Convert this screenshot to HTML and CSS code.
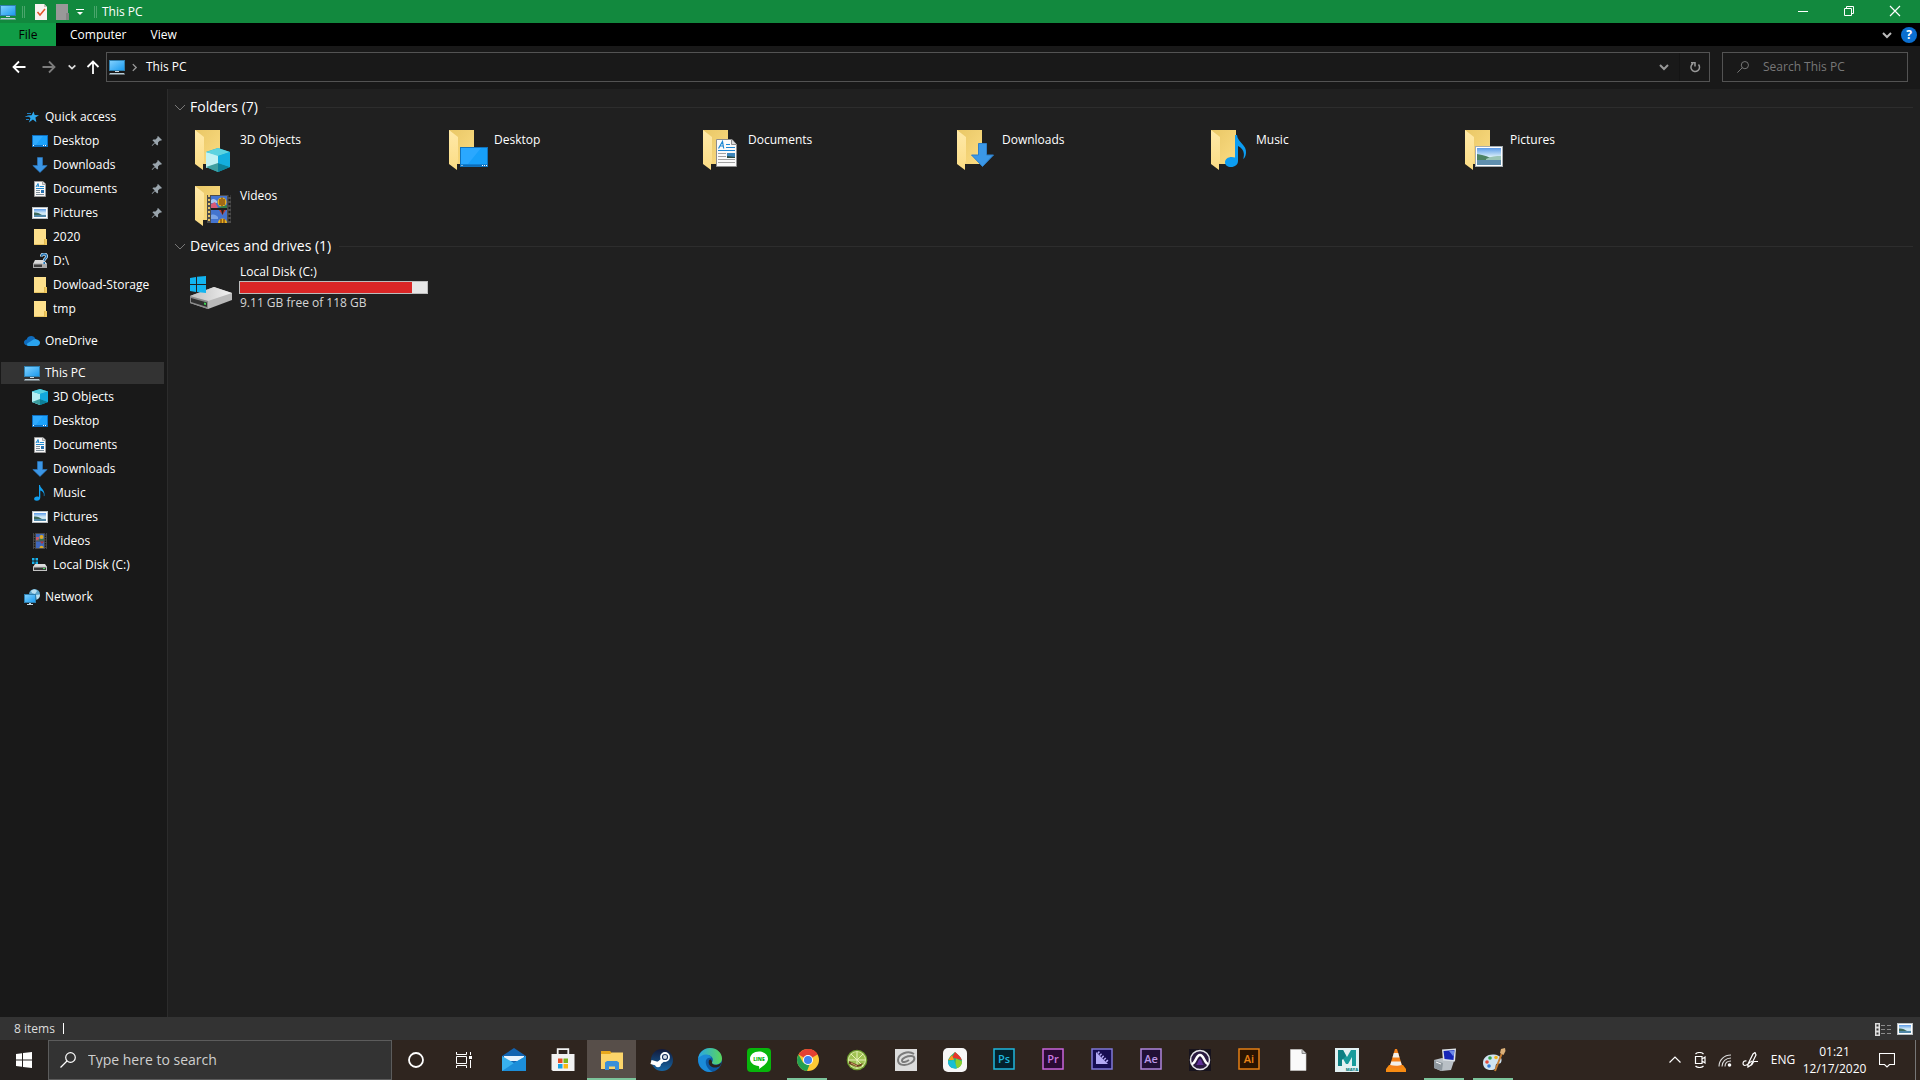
FILE: index.html
```html
<!DOCTYPE html>
<html lang="en">
<head>
    <meta charset="UTF-8">
    <meta name="viewport" content="width=device-width, initial-scale=1.0">
    <title>This PC</title>
    <link rel="stylesheet" href="styles.css">
</head>
<body>
    <!-- Shared icons -->
    <svg class="sprite" aria-hidden="true">
        <defs>
            <linearGradient id="gScreen" x1="0" y1="0" x2="1" y2="1">
                <stop offset="0" stop-color="#7fd0ff"/>
                <stop offset="1" stop-color="#1c9bee"/>
            </linearGradient>
            <linearGradient id="gFolder" x1="0" y1="0" x2="1" y2="1">
                <stop offset="0" stop-color="#e9c766"/>
                <stop offset="1" stop-color="#fbdc83"/>
            </linearGradient>
            <linearGradient id="gFlap" x1="0" y1="0" x2="0" y2="1">
                <stop offset="0" stop-color="#ffe9a8"/>
                <stop offset="1" stop-color="#fbdc84"/>
            </linearGradient>
            <linearGradient id="gSky" x1="0" y1="0" x2="0" y2="1">
                <stop offset="0" stop-color="#5b9be8"/>
                <stop offset="0.5" stop-color="#d5ecf8"/>
                <stop offset="1" stop-color="#b5d5e2"/>
            </linearGradient>
            <linearGradient id="gEdge" x1="0" y1="0" x2="1" y2="0">
                <stop offset="0" stop-color="#28a5e8"/>
                <stop offset="1" stop-color="#5bd75a"/>
            </linearGradient>
            <linearGradient id="gDrive" x1="0" y1="0" x2="1" y2="0">
                <stop offset="0" stop-color="#bfbfbf"/>
                <stop offset="1" stop-color="#f2f2f2"/>
            </linearGradient>
            <linearGradient id="gSteam" x1="0" y1="0" x2="0" y2="1">
                <stop offset="0" stop-color="#12193a"/>
                <stop offset="1" stop-color="#1666a5"/>
            </linearGradient>
        </defs>

        <symbol id="pc" viewBox="0 0 16 16">
            <rect x="0" y="1" width="16" height="11" fill="#2f7fae"/>
            <rect x="1" y="2" width="14" height="9" fill="url(#gScreen)"/>
            <path d="M6 12h4v1H6z" fill="#cfd8dd"/>
            <path d="M1 14h14l1 1.500H0z" fill="#b8cbd5"/>
        </symbol>
        <symbol id="star" viewBox="0 0 16 16">
            <path d="M9.500 2.500l1.200 3.600 4.300.2-3.600 2.300 1 4.600-3.500-2.600-4 2.900 1.600-4.600L3 6.500l4.600-.3z" fill="#2ea8ee"/>
            <path d="M3 4.500h4M1.500 7.500h4M2 10.500h3" stroke="#1f7fc0"/>
        </symbol>
        <symbol id="desktop" viewBox="0 0 16 16">
            <rect x="0" y="2" width="16" height="12" fill="#0e6fc0"/>
            <rect x="1" y="3" width="14" height="9" fill="#1ba1fb"/>
            <path d="M1 3h10L4 12H1z" fill="#2faaff"/>
            <path d="M1 12.500h1M11 12.500h1M13 12.500h1" stroke="#fff"/>
        </symbol>
        <symbol id="downloads" viewBox="0 0 16 16">
            <path d="M5.500 0.500h5v8h4.700L8 15.500.8 8.500h4.700z" fill="#3b96e6" stroke="#2b7bc5" stroke-width=".6"/>
        </symbol>
        <symbol id="documents" viewBox="0 0 16 16">
            <path d="M2.500.5H11L13.500 3v12.500h-11z" fill="#f8f8f8" stroke="#9a9a9a"/>
            <path d="M10.500.5v3h3" fill="#ddd" stroke="#8a8a8a" stroke-width=".7"/>
            <path d="M4 6L6 2.500 7 6M4.500 5h2.300M4 7.500h8M8 5.500h4" stroke="#1f88cf" fill="none"/>
            <path d="M4 9.500h4M4 11.500h4M4 13.500h8" stroke="#7d8c97"/>
            <path d="M9 9h3v3H9z" fill="#2872b0"/>
        </symbol>
        <symbol id="pictures" viewBox="0 0 16 16">
            <rect x=".5" y="2.500" width="15" height="11" fill="#fff" stroke="#b9c0c4"/>
            <rect x="2" y="4" width="12" height="8" fill="url(#gSky)"/>
            <path d="M2 7.500c3-.5 6 1 8 2.500H2z" fill="#3d6a5a"/>
            <path d="M2 10h12v2H2z" fill="#4f87a8"/>
        </symbol>
        <symbol id="folder" viewBox="0 0 16 16">
            <path d="M2 0h12v16H2z" fill="#fde08c"/>
            <path d="M12 10h3v6h-3z" fill="#f0c960"/>
            <path d="M12.500 10v5.500H2" stroke="#d9b047" stroke-width=".6" fill="none"/>
        </symbol>
        <symbol id="drive-unknown" viewBox="0 0 16 16">
            <path d="M3 7h9l3 4H1z" fill="#d9d9d9"/>
            <path d="M1 10.500h14v4.500H1z" fill="#a9a9a9"/>
            <path d="M2 11.500h8v2.500H2z" fill="#3c3c3c"/>
            <path d="M9.500 3.500c0-3.300 5-3.300 5 0 0 2-2.300 2-2.300 4.200M12.200 9v2" stroke="#d7ecfb" stroke-width="3" fill="none"/>
            <path d="M9.500 3.500c0-3.300 5-3.300 5 0 0 2-2.300 2-2.300 4.200M12.200 9v2" stroke="#1f6fae" stroke-width="1.500" fill="none"/>
        </symbol>
        <symbol id="onedrive" viewBox="0 0 16 16">
            <path d="M4 12.500C1 12.500 0 11 0 9.300 0 7.700 1.200 6.600 2.600 6.400 3.500 4 5.200 3 7.200 3c2 0 3.600 1.200 4.200 3L5 12.500z" fill="#0f6cbd"/>
            <path d="M4.500 13C3 13 2.200 11.500 3.500 10.300L9.500 6.500c1-.6 2.500-.8 3.500 0 1.600.4 3 1.600 3 3.300 0 1.900-1.400 3.200-3.200 3.200z" fill="#2aa3ee"/>
        </symbol>
        <symbol id="cube" viewBox="0 0 16 16">
            <path d="M8 0l8 2.500v10.500L8 16 0 13V2.500z" fill="#14a9c9"/>
            <path d="M0 2.500L8 5v11L0 13z" fill="#b5eef2"/>
            <path d="M8 5l8-2.500L8 0 0 2.500z" fill="#55cfdf"/>
            <path d="M0 13l8-3v6z" fill="#3a9c9d"/>
            <path d="M8 10l8 3-8 3z" fill="#0d7f98"/>
            <path d="M8 5l8-2.500V13L8 10z" fill="#12a8dc"/>
        </symbol>
        <symbol id="music" viewBox="0 0 16 16">
            <path d="M7 0h1c.3 3.500 5 4.500 4.500 10.500-.5 1-1 .8-.6-.5C12.200 7.500 10 6 8.300 5.500v7c0 2-1.500 3.300-3.500 3.300C1 15.800 1.500 11.500 5 11.500c.8 0 1.500.2 2 .4z" fill="#12a0f0"/>
        </symbol>
        <symbol id="videos" viewBox="0 0 16 16">
            <rect x="1" y="0" width="14" height="16" fill="#4b4b4b"/>
            <path d="M2.500 0v16M13.500 0v16" stroke="#181818" stroke-width="1.200" stroke-dasharray="1.500 1"/>
            <rect x="4" y="1" width="8" height="6.500" fill="#3f68bd"/>
            <rect x="4" y="8.500" width="8" height="6.500" fill="#3f68bd"/>
            <path d="M4 4h3v3.500H4z" fill="#c55a6d"/>
            <circle cx="9.500" cy="4" r="2" fill="#dda920"/>
            <path d="M4 7.500h8V6H8z" fill="#397345"/>
            <path d="M8 8.500h4l-2 2.500z" fill="#b63631"/>
            <path d="M7.500 15c0-3 4-3 4 0z" fill="#dda920"/>
        </symbol>
        <symbol id="drive" viewBox="0 0 16 16">
            <path d="M3 7h10l2 3H1z" fill="#dcdcdc"/>
            <path d="M1 9.500h14V14H1z" fill="#c4c4c4"/>
            <path d="M2 10.500h12V13H2z" fill="#373737"/>
            <path d="M11 11.500h2" stroke="#42e25a"/>
            <path d="M0 1h2.500v2.500H0zM3.500 1H6v2.500H3.500zM0 4.500h2.500V7H0zM3.500 4.500H6V7H3.500z" fill="#19b1ea"/>
        </symbol>
        <symbol id="network" viewBox="0 0 16 16">
            <circle cx="10.500" cy="5.500" r="5.500" fill="#5da5cb"/>
            <path d="M7 2c2-2 5-2 6 0l-2 3-3-1zM12 6l4-.5c0 2-1 4-3 5z" fill="#b9dff0"/>
            <rect x="0" y="5" width="12" height="9" fill="#2f7fae"/>
            <rect x="1" y="6" width="10" height="7" fill="url(#gScreen)"/>
            <path d="M5 14h2v1H5zM3 15h6v1H3z" fill="#c4d6e0"/>
        </symbol>
        <symbol id="pin" viewBox="0 0 12 12">
            <path d="M7 1l4 4-1.200.7-.8-.2-2 2 .1 2.200-.9.8-2.300-2.300L1.500 10.700l-.8.3.4-.9 2.600-2.500L1.400 5.300l.9-.8 2.200.1 2-2-.2-.8z" fill="#9aa5ad"/>
        </symbol>
        <symbol id="chevron" viewBox="0 0 12 12">
            <path d="M1 4l5 5 5-5" fill="none" stroke="currentColor"/>
        </symbol>
        <symbol id="chevron-bold" viewBox="0 0 12 12">
            <path d="M2 4l4 4 4-4" fill="none" stroke="currentColor" stroke-width="2"/>
        </symbol>
        <symbol id="search" viewBox="0 0 16 16">
            <circle cx="10.500" cy="5.500" r="4.800" fill="none" stroke="currentColor" stroke-width="1.200"/>
            <path d="M7 9L.5 15.500" stroke="currentColor" stroke-width="1.200"/>
        </symbol>
        <symbol id="folder-back" viewBox="0 0 48 48">
            <path d="M7 4h25v34H7z" fill="url(#gFolder)"/>
            <path d="M7 4l9 7v24l-1 3v6l-8-6z" fill="url(#gFlap)"/>
        </symbol>
    </svg>

    <div class="screen">
        <header class="titlebar">
            <svg class="icon"><use href="#pc"/></svg>
            <span class="divider"></span>
            <button class="quick" aria-label="Properties">
                <svg class="icon" viewBox="0 0 16 16">
                    <path d="M2 0h9l3 3v13H2z" fill="#f7f3f1"/>
                    <path d="M11 0v3h3" fill="#c9c2bd"/>
                    <path d="M4.500 8l2.500 3 5-6" fill="none" stroke="#e0562b" stroke-width="1.500"/>
                </svg>
            </button>
            <button class="quick" aria-label="New folder">
                <svg class="icon" viewBox="0 0 16 16">
                    <path d="M2 0h12v16H2z" fill="#999"/>
                    <path d="M12 9h3v7h-3z" fill="#848484"/>
                </svg>
            </button>
            <button class="quick small" aria-label="Customize toolbar">
                <svg class="icon tiny" viewBox="0 0 8 8"><path d="M0 1.500h8" stroke="#fff"/><path d="M1 4h6L4 7z" fill="#fff"/></svg>
            </button>
            <span class="divider"></span>
            <h1>This PC</h1>
            <div class="window-buttons">
                <button aria-label="Minimize"><svg class="icon" viewBox="0 0 16 16"><path d="M3 7.500h10" stroke="#fff"/></svg></button>
                <button aria-label="Restore"><svg class="icon" viewBox="0 0 16 16"><path d="M3.500 4.500h7v7h-7zM5.500 4.500v-2h7v7h-2" fill="none" stroke="#fff"/></svg></button>
                <button aria-label="Close"><svg class="icon" viewBox="0 0 16 16"><path d="M3 2l10 10M13 2L3 12" stroke="#fff" stroke-width="1.200"/></svg></button>
            </div>
        </header>

        <nav class="ribbon">
            <button class="file-tab">File</button>
            <button class="tab">Computer</button>
            <button class="tab">View</button>
            <div class="ribbon-right">
                <button aria-label="Expand the ribbon"><svg class="icon tiny-12"><use href="#chevron-bold"/></svg></button>
                <button class="help" aria-label="Help">?</button>
            </div>
        </nav>

        <div class="address-row">
            <div class="nav-buttons">
                <button class="nav" aria-label="Back"><svg class="icon" viewBox="0 0 16 16"><path d="M14.500 8H3M8 2.500L2.500 8 8 13.500" fill="none" stroke="#fff" stroke-width="1.800"/></svg></button>
                <button class="nav" aria-label="Forward"><svg class="icon" viewBox="0 0 16 16"><path d="M1.500 8H13M8 2.500L13.500 8 8 13.500" fill="none" stroke="#7d7d7d" stroke-width="1.800"/></svg></button>
                <button class="nav recent" aria-label="Recent locations"><svg class="icon tiny-10" viewBox="0 0 12 12"><path d="M2 4l4 4 4-4" fill="none" stroke="#ddd" stroke-width="2"/></svg></button>
                <button class="nav up" aria-label="Up"><svg class="icon" viewBox="0 0 16 16"><path d="M8 15V3M2.500 8L8 2.500 13.500 8" fill="none" stroke="#fff" stroke-width="1.800"/></svg></button>
            </div>
            <div class="address">
                <svg class="icon"><use href="#pc"/></svg>
                <svg class="icon crumb" viewBox="0 0 8 8"><path d="M2.500 1l3 3-3 3" fill="none" stroke="#999" stroke-width="1.200"/></svg>
                <button class="crumb-name">This PC</button>
                <button class="address-btn" aria-label="Previous locations"><svg class="icon tiny-12"><use href="#chevron-bold"/></svg></button>
                <button class="address-btn refresh" aria-label="Refresh"><svg class="icon" viewBox="0 0 16 16"><path d="M11.500 5.500A4.300 4.300 0 1 1 6 4.600M4 3.800h4v3.700" fill="none" stroke="currentColor" stroke-width="1.500"/></svg></button>
            </div>
            <label class="search-box">
                <svg class="icon tiny-12"><use href="#search"/></svg>
                <input type="text" placeholder="Search This PC" aria-label="Search This PC">
            </label>
        </div>

        <div class="main">
            <aside class="sidebar">
                <a class="item" href="#"><svg class="icon"><use href="#star"/></svg>Quick access</a>
                <a class="item child" href="#"><svg class="icon"><use href="#desktop"/></svg>Desktop<svg class="pin"><use href="#pin"/></svg></a>
                <a class="item child" href="#"><svg class="icon"><use href="#downloads"/></svg>Downloads<svg class="pin"><use href="#pin"/></svg></a>
                <a class="item child" href="#"><svg class="icon"><use href="#documents"/></svg>Documents<svg class="pin"><use href="#pin"/></svg></a>
                <a class="item child" href="#"><svg class="icon"><use href="#pictures"/></svg>Pictures<svg class="pin"><use href="#pin"/></svg></a>
                <a class="item child" href="#"><svg class="icon"><use href="#folder"/></svg>2020</a>
                <a class="item child" href="#"><svg class="icon"><use href="#drive-unknown"/></svg>D:\</a>
                <a class="item child" href="#"><svg class="icon"><use href="#folder"/></svg>Dowload-Storage</a>
                <a class="item child" href="#"><svg class="icon"><use href="#folder"/></svg>tmp</a>

                <a class="item group" href="#"><svg class="icon"><use href="#onedrive"/></svg>OneDrive</a>

                <a class="item group selected" href="#"><svg class="icon"><use href="#pc"/></svg>This PC</a>
                <a class="item child" href="#"><svg class="icon"><use href="#cube"/></svg>3D Objects</a>
                <a class="item child" href="#"><svg class="icon"><use href="#desktop"/></svg>Desktop</a>
                <a class="item child" href="#"><svg class="icon"><use href="#documents"/></svg>Documents</a>
                <a class="item child" href="#"><svg class="icon"><use href="#downloads"/></svg>Downloads</a>
                <a class="item child" href="#"><svg class="icon"><use href="#music"/></svg>Music</a>
                <a class="item child" href="#"><svg class="icon"><use href="#pictures"/></svg>Pictures</a>
                <a class="item child" href="#"><svg class="icon"><use href="#videos"/></svg>Videos</a>
                <a class="item child" href="#"><svg class="icon"><use href="#drive"/></svg>Local Disk (C:)</a>

                <a class="item group" href="#"><svg class="icon"><use href="#network"/></svg>Network</a>
            </aside>

            <main class="content">
                <h2><svg class="icon tiny-12"><use href="#chevron"/></svg>Folders (7)</h2>
                <div class="tiles">
                    <a class="tile" href="#">
                        <svg viewBox="0 0 48 48">
                            <use href="#folder-back"/>
                            <path d="M30 22l12 4v15l-12 5-12-5V26z" fill="#14a9c9"/>
                            <path d="M18 26l12 3v10l-12 3z" fill="#c0f2f3"/>
                            <path d="M18 26l12-4 12 4-12 4z" fill="#5cd3e0"/>
                            <path d="M18 41l12-4v9z" fill="#3f9fa0"/>
                            <path d="M30 37l12 4-12 5z" fill="#0d839b"/>
                            <path d="M30 30l12-4v15l-12-4z" fill="#14aede"/>
                        </svg>
                        <span>3D Objects</span>
                    </a>
                    <a class="tile" href="#">
                        <svg viewBox="0 0 48 48">
                            <use href="#folder-back"/>
                            <rect x="18.500" y="21.500" width="27" height="19" fill="#17a0fa" stroke="#1173bd"/>
                            <path d="M19 22h20L26 38h-7z" fill="#2aa8ff"/>
                            <path d="M19 39.200h26" stroke="#0d6cb8" stroke-width="1.600"/>
                            <path d="M19.500 39.500h1M40 39.500h1M42 39.500h1M44 39.500h1" stroke="#fff"/>
                        </svg>
                        <span>Desktop</span>
                    </a>
                    <a class="tile" href="#">
                        <svg viewBox="0 0 48 48">
                            <use href="#folder-back"/>
                            <path d="M20.500 13.500H36l4.500 5v22h-20z" fill="#fafafa" stroke="#8d8d8d"/>
                            <path d="M35.500 13.500v5h5" fill="#ddd" stroke="#8d8d8d"/>
                            <path d="M22.500 22.500l4-7 1.200 7M24 20h3.500M30 18.500h4M30 21.500h9M22 24.500h17" fill="none" stroke="#1d87d3" stroke-width="1.200"/>
                            <path d="M22 27.500h8M22 30.500h8M22 33.500h17M22 36.500h17" stroke="#a2a2a2"/>
                            <path d="M31 27h8v5h-8z" fill="#3e86bb"/>
                            <path d="M31 30l8 1v1h-8z" fill="#2c4b41"/>
                        </svg>
                        <span>Documents</span>
                    </a>
                    <a class="tile" href="#">
                        <svg viewBox="0 0 48 48">
                            <use href="#folder-back"/>
                            <path d="M28.500 17.500h8v11.500h7L32.500 40.500 21.500 29h7z" fill="#3b98e8" stroke="#2d7fc8"/>
                        </svg>
                        <span>Downloads</span>
                    </a>
                    <a class="tile" href="#">
                        <svg viewBox="0 0 48 48">
                            <use href="#folder-back"/>
                            <path d="M31 9h2c.5 7 10 10 9 18-.3 3-1.500 5.500-2.800 6 .8-3 2.400-9-5.200-13v15c0 3.500-3 6-7 6-3.500 0-6-1.800-6-4.800 0-4 5-6.500 10-4.700z" fill="#0c9df2"/>
                        </svg>
                        <span>Music</span>
                    </a>
                    <a class="tile" href="#">
                        <svg viewBox="0 0 48 48">
                            <use href="#folder-back"/>
                            <rect x="17.500" y="20.500" width="27" height="20" fill="#fff" stroke="#a4adb2"/>
                            <rect x="19" y="22" width="24" height="17" fill="url(#gSky)"/>
                            <path d="M19 28c7 1 13 3 17 6H19z" fill="#4d8262"/>
                            <path d="M28 33c5-3 10-3 15-3v4H28z" fill="#9ac4b5"/>
                            <path d="M19 34h24v5H19z" fill="#5f8fae"/>
                        </svg>
                        <span>Pictures</span>
                    </a>
                    <a class="tile" href="#">
                        <svg viewBox="0 0 48 48">
                            <use href="#folder-back"/>
                            <rect x="19" y="13" width="24" height="28" fill="#4c4c4c"/>
                            <path d="M21 13v28" stroke="#e8c566" stroke-width="2" stroke-dasharray="2 2"/>
                            <path d="M41.500 13v28" stroke="#1c1c1c" stroke-width="2" stroke-dasharray="2 2"/>
                            <rect x="23" y="14" width="16" height="12" fill="#4474cf"/>
                            <rect x="23" y="28" width="16" height="13" fill="#4474cf"/>
                            <path d="M23 18c2-2 4-1 6 1v2h-6z" fill="#a9c6ef"/>
                            <path d="M23 22l4-2 3 6h-7z" fill="#d85a76"/>
                            <circle cx="34" cy="20" r="4.500" fill="#e8b21c"/>
                            <path d="M34 15.500v9M32 17v6M36 17v6" stroke="#5d2510"/>
                            <path d="M29 26h10v-3z" fill="#358046"/>
                            <path d="M23 27h16" stroke="#1f1f1f" stroke-width="2"/>
                            <path d="M31 28h7l-3.500 5z" fill="#c23c30"/>
                            <path d="M33 28h3l-1.500 5z" fill="#26201e"/>
                            <path d="M23 33c3-1 5 0 7 2v2h-7z" fill="#7ba3e6"/>
                            <path d="M30 41c0-6 9-6 9 0z" fill="#e8b21c"/>
                            <path d="M33 37v4M36 37v4" stroke="#5d2510"/>
                        </svg>
                        <span>Videos</span>
                    </a>
                </div>

                <h2><svg class="icon tiny-12"><use href="#chevron"/></svg>Devices and drives (1)</h2>
                <a class="drive" href="#">
                    <svg viewBox="0 0 48 48">
                        <path d="M2 32l24-9 18 6v7l-24 9-18-6z" fill="#b9b9b9"/>
                        <path d="M2 32l24-9 18 6-24 8z" fill="url(#gDrive)"/>
                        <path d="M2 32l18 5v8L2 39z" fill="#8b8b8b"/>
                        <path d="M3 34l16 4.500V43L3 38z" fill="#2f2f2f"/>
                        <path d="M16 38.500l2 .5v2l-2-.5z" fill="#3fd653"/>
                        <path d="M2 14l6-1v7H2zM9 12.800L18 12v8H9zM2 21h6v7l-6-1zM9 21h9v8l-9-1z" fill="#12b4f0"/>
                    </svg>
                    <div class="drive-info">
                        <span>Local Disk (C:)</span>
                        <div class="usage" role="progressbar" aria-label="Used space" aria-valuenow="92" aria-valuemin="0" aria-valuemax="100"><div class="used" style="width: 92%"></div></div>
                        <span class="free">9.11 GB free of 118 GB</span>
                    </div>
                </a>
            </main>
        </div>

        <footer class="status">
            <span>8 items</span>
            <span class="caret"></span>
            <div class="view-buttons">
                <button aria-label="Details view">
                    <svg class="icon" viewBox="0 0 16 16">
                        <path d="M0 2h5v13H0z" fill="#ddd"/>
                        <path d="M1.500 3.500h2v2h-2zM1.500 7.500h2v2h-2zM1.500 11.500h2v2h-2z" fill="#333"/>
                        <path d="M6 4.500h4M12 4.500h4M6 8.500h4M12 8.500h4M6 12.500h4M12 12.500h4" stroke="#8c8c8c"/>
                    </svg>
                </button>
                <button aria-label="Large icons"><svg class="icon"><use href="#pictures"/></svg></button>
            </div>
        </footer>

        <div class="taskbar">
            <button class="start" aria-label="Start"><svg class="icon" viewBox="0 0 16 16"><path d="M0 2l6-.8v6.300H0zM7 1l9-1v7.500H7zM0 8.500h6v6.300L0 14zM7 8.500h9V16l-9-1z" fill="#fff"/></svg></button>
            <label class="task-search">
                <svg class="icon"><use href="#search"/></svg>
                <input type="text" placeholder="Type here to search" aria-label="Type here to search">
            </label>
            <div class="apps">
                <button class="system" aria-label="Cortana"><svg viewBox="0 0 24 24"><circle cx="12" cy="12" r="7" fill="none" stroke="#fff" stroke-width="1.800"/></svg></button>
                <button class="system" aria-label="Task View"><svg viewBox="0 0 24 24"><path d="M4.500 4v2.500h10V4M4.500 20v-2.500h10V20M4.500 8.500h10v7h-10zM18.500 4v3M18.500 12v8" fill="none" stroke="#fff"/><path d="M17 8h3v3h-3z" fill="#fff"/></svg></button>
                <button aria-label="Mail"><svg viewBox="0 0 24 24"><path d="M0 8l12-8 12 8v15H0z" fill="#1263b0"/><path d="M2 8h20v5H2z" fill="#e8f2fb"/><path d="M0 8l12 7 12-7v15H0z" fill="#38b1ee"/><path d="M0 23L12 15 24 8v15z" fill="#1c8ed9"/></svg></button>
                <button aria-label="Microsoft Store"><svg viewBox="0 0 24 24"><path d="M6.700 7V1.200h10.600V7" fill="none" stroke="#f2f2f2" stroke-width="1.800"/><path d="M.5 6h23v17H2L.5 22z" fill="#f2f2f2"/><path d="M7 10.500h4.500V15H7z" fill="#e74c25"/><path d="M12.500 10.500H17V15h-4.500z" fill="#7bb51c"/><path d="M7 16h4.500v4.500H7z" fill="#16a2e6"/><path d="M12.500 16H17v4.500h-4.500z" fill="#fbb813"/></svg></button>
                <button class="active" aria-label="File Explorer"><svg viewBox="0 0 24 24"><path d="M1 3h9l2 2h11v16H1z" fill="#e8a91d"/><path d="M1 6h9l2-1.500h11V21H1z" fill="#fcd56a"/><path d="M5 22v-7.500L7 13h10l2 1.500V22h-4v-3.500H9V22z" fill="#3a8fd8"/></svg></button>
                <button aria-label="Steam"><svg viewBox="0 0 24 24"><circle cx="13" cy="12" r="11" fill="url(#gSteam)"/><path d="M2 14l7 2 6-5" fill="none" stroke="#fff" stroke-width="4"/><circle cx="16" cy="9" r="4" fill="#17305c" stroke="#fff" stroke-width="1.800"/><circle cx="16" cy="9" r="2" fill="#d5dce5"/><circle cx="9" cy="16.500" r="2.800" fill="#fff"/></svg></button>
                <button aria-label="Microsoft Edge"><svg viewBox="0 0 24 24"><circle cx="12" cy="12" r="12" fill="#0c59a4"/><path d="M0 11C1 4 6 0 12 0c7 0 12 5 12 10.500 0 4-3 6-6.500 6-3 0-4.500-1.200-3-3C16 10 13 7 9 7c-4 0-7 2-9 4z" fill="url(#gEdge)"/><path d="M0 11c2-3 5-4.500 8-4.500 3 0 5 1.500 5.500 3.500C9 9 7 12 8 16c1 4 4 7 7 7.500C7 25.500 0 20 0 11z" fill="#1b8bd8"/><path d="M14 13.500c-.5 2 1 3.500 4 3.500 2 0 4-1 5.500-2.500L22 18c-2 1.500-5 2-8 1-3-1.200-4-4-3-7 1-1 2.500-1 3 1.500z" fill="#2b211c"/></svg></button>
                <button aria-label="LINE"><svg viewBox="0 0 24 24"><rect width="24" height="24" rx="4" fill="#07b50b"/><path d="M12 3.500c5 0 9 3.200 9 7.200 0 4.300-5.500 7.800-9 10.300.3-1.300.5-2.800-.5-3C7 17.800 3 14.600 3 10.700c0-4 4-7.200 9-7.200z" fill="#fff"/><text x="12" y="13" class="line-text">LINE</text></svg></button>
                <button class="running" aria-label="Google Chrome"><svg viewBox="0 0 24 24"><circle cx="12" cy="12" r="11" fill="#fcc934"/><path d="M12 12L2.500 6.500A11 11 0 0 1 21.500 6.500z" fill="#e34133"/><path d="M12 6.500h9.800L21 5.500A11 11 0 0 0 12 1z" fill="#e34133"/><path d="M2.500 6.500L7 14.500l6.500 2.300L11 23A11 11 0 0 1 2.500 6.500z" fill="#23a051"/><circle cx="12" cy="12" r="5" fill="#fff"/><circle cx="12" cy="12" r="4" fill="#3f82ef"/></svg></button>
                <button aria-label="Lime"><svg viewBox="0 0 24 24"><circle cx="12" cy="12" r="10.300" fill="#6c9c2d"/><circle cx="12" cy="12" r="9" fill="#dce9a5"/><circle cx="12" cy="12" r="8" fill="#9fc252"/><path d="M12 12V4M12 12h8M12 12H4M12 12L6 6M12 12l6-6M12 12l6 6M12 12v8" stroke="#e6f0b8"/><path d="M4 13l9 4 5-2-2 3-4 1-8-3z" fill="#6e3f21"/><path d="M6 15l6 3" stroke="#d0a56d"/></svg></button>
                <button aria-label="Clip Studio"><svg viewBox="0 0 24 24"><rect x="1" y="1" width="22" height="22" fill="#dcdcdc"/><path d="M20 6C14 2 4 6 4 12c0 6 8 6 13 3 5-3 4-7 0-7-4 0-9 2-9 4.500s4 1.500 7-.5" fill="none" stroke="#7b7b7b" stroke-width="2"/></svg></button>
                <button aria-label="MediBang Paint"><svg viewBox="0 0 24 24"><rect width="24" height="24" rx="5" fill="#f7f7f7"/><path d="M12 4c4 3.500 7 6 7 9.500a7 7 0 0 1-14 0C5 10 8 7.500 12 4z" fill="#2bb673"/><path d="M12 4c4 3.500 6 5 6.800 8L9 9.500z" fill="#e7352c"/><path d="M9 7L5.300 12 11 12z" fill="#fb9b1d"/><path d="M5 13l5 7.200C6.500 19.500 5 16.500 5 13z" fill="#1e9de0"/><path d="M12 20.500c4 0 7-3 7-7l-6-3z" fill="#8ccf2e"/><path d="M5 13l6-1 3 8.200c-4 1-8-1-9-7.200z" fill="#18bfd3"/></svg></button>
                <button aria-label="Photoshop"><svg viewBox="0 0 24 24"><rect x="2" y="1" width="20" height="20" fill="#03212c" stroke="#1fb6dd" stroke-width="1.500"/><text x="12" y="15" class="adobe" fill="#1fb6dd">Ps</text></svg></button>
                <button aria-label="Premiere Pro"><svg viewBox="0 0 24 24"><rect x="2" y="1" width="20" height="20" fill="#2a0a33" stroke="#c965dc" stroke-width="1.500"/><text x="12" y="15" class="adobe" fill="#cc79e0">Pr</text></svg></button>
                <button aria-label="Media Encoder"><svg viewBox="0 0 24 24"><rect x="2" y="1" width="20" height="20" fill="#160d52" stroke="#8078d8" stroke-width="1.500"/><path d="M6 4l12 12H6z" fill="#b3aaf5"/><path d="M8 4l10 10" stroke="#b3aaf5" stroke-width="2.500" stroke-dasharray="1.500 1.500"/></svg></button>
                <button aria-label="After Effects"><svg viewBox="0 0 24 24"><rect x="2" y="1" width="20" height="20" fill="#211035" stroke="#b086dd" stroke-width="1.500"/><text x="12" y="15" class="adobe" fill="#bb97e6">Ae</text></svg></button>
                <button aria-label="Pro Tools"><svg viewBox="0 0 24 24"><rect x="1" y="1" width="22" height="22" fill="#17131d"/><circle cx="12" cy="12" r="9.500" fill="#2a1a40" stroke="#e6e6ea" stroke-width="1.500"/><path d="M4 16c4-1 4-9 8-9s4 8 8 9" fill="none" stroke="#fff" stroke-width="2.500"/><path d="M8 17c2-1 2-6 4-6s2 5 4 6z" fill="#5d2f96"/></svg></button>
                <button aria-label="Illustrator"><svg viewBox="0 0 24 24"><rect x="2" y="1" width="20" height="20" fill="#2a1402" stroke="#e57f15" stroke-width="1.500"/><text x="12" y="15" class="adobe" fill="#ec8416">Ai</text></svg></button>
                <button aria-label="Document"><svg viewBox="0 0 24 24"><path d="M4.500 1.500H16l4 4v17H4.500z" fill="#fafafa" stroke="#d0d0d0" stroke-width=".6"/><path d="M16 1.500v4h4" fill="#ccc" stroke="#777" stroke-width=".8"/></svg></button>
                <button aria-label="Maya"><svg viewBox="0 0 24 24"><rect width="24" height="24" fill="#e2f1f2"/><path d="M3 18V2h5l4 7 4-7h5v16h-4V9l-4 7h-2L7 9v9z" fill="#179b9b"/><path d="M3 2h5l3 6-4 4v6H3z" fill="#0c7f82"/><text x="17" y="23" class="maya-text">MAYA</text></svg></button>
                <button aria-label="VLC media player"><svg viewBox="0 0 24 24"><path d="M5 17h14l3 4v3H2v-3z" fill="#f78b12"/><path d="M11 1h2l5.500 18c-2 2-11 2-13 0z" fill="#f5821a"/><path d="M9.800 5h4.400l1.300 4.500H8.500zM7.300 13.500h9.400l1 3.500c-3 1-8 1-11.500 0z" fill="#f3f0ea"/></svg></button>
                <button class="running" aria-label="Drivers"><svg viewBox="0 0 24 24"><path d="M1 12l8-2 12 3-3 9-10 1-7-3z" fill="#b9c0c6"/><path d="M1 12l9 3-1 8-8-3z" fill="#8f989f"/><path d="M9 1.500l14-1-1 13-12-1z" fill="#dde3e8"/><path d="M10.500 3l11-1-1 10-9-1z" fill="#1526b8"/><path d="M16 3l5.500-.5-1 6z" fill="#6f8be8"/><path d="M3 14l5 2" stroke="#fff"/></svg></button>
                <button class="running" aria-label="Paint"><svg viewBox="0 0 24 24"><path d="M1 15C1 9 6 6 12 6.500c6 .5 9 4 7 8-1 2-4 .5-5 2-1 2 1 5-4 5.500C5 22.500 1 20 1 15z" fill="#cfe3f1"/><circle cx="5" cy="14" r="1.800" fill="#e44a3c"/><circle cx="8" cy="10" r="1.800" fill="#35a24b"/><circle cx="14" cy="9.500" r="1.800" fill="#f2b31c"/><circle cx="7" cy="18" r="1.800" fill="#3278d4"/><path d="M20 5L13 23" stroke="#c37c33" stroke-width="2"/><path d="M18 5l1-4 4-1 .5 3-2 4z" fill="#dcb078"/></svg></button>
            </div>
            <div class="tray">
                <button aria-label="Show hidden icons"><svg class="icon" viewBox="0 0 16 16"><path d="M2.500 10.500L8 5l5.500 5.500" fill="none" stroke="#fff" stroke-width="1.200"/></svg></button>
                <button aria-label="Meet Now"><svg class="icon" viewBox="0 0 16 16"><path d="M3.500 4.500h6.500v7H3.500zM10 7l3-2v6l-3-2M3.500 2c2-2 6-2 8 0M3.500 14c2 2 6 2 8 0" fill="none" stroke="#fff" stroke-width="1.200"/></svg></button>
                <button aria-label="Wireless network"><svg class="icon" viewBox="0 0 16 16"><path d="M2 14.500C2 8 7 3 14 3M5 14.500c0-5 4-8.500 9-8.500M8 14.500C8 11 10.500 9 14 9" fill="none" stroke="#ddd" stroke-width="1.100"/><circle cx="12.500" cy="13" r="1.800" fill="#fff"/></svg></button>
                <button aria-label="Windows Ink"><svg class="icon" viewBox="0 0 16 16"><path d="M6 12L11 2l2-1.500L14 3 9 13l-3 2zM4.500 9C.5 8 0 13.500 3 13.500c3 0 5-4 7-4.500M9 13c2 .5 1-3 3.500-3.500H16" fill="none" stroke="#fff" stroke-width="1.200"/></svg></button>
                <button class="lang">ENG</button>
                <button class="clock"><span>01:21</span><span>12/17/2020</span></button>
                <button class="notify" aria-label="Notifications"><svg class="icon" viewBox="0 0 16 16"><path d="M.5 1.500h15v11h-5L8 15l-2.500-2.500h-5z" fill="none" stroke="#fff" stroke-width="1.100"/></svg></button>
                <span class="show-desktop"></span>
            </div>
        </div>
    </div>
</body>
</html>
```
FILE: styles.css
```css
:root {
    --accent: #12893e;
    --accent-light: #109c46;
    --bg-dark: #191919;
    --bg-content: #202020;
    --border-color: #535353;
    --text-color: #ffffff;
    --underline: #7cc49b;
}

* {
    box-sizing: border-box;
}

body {
    font-family: 'Segoe UI', 'Open Sans', 'Noto Sans', sans-serif;
    font-size: 12px;
    line-height: 16px;
    color: var(--text-color);
    background-color: var(--bg-dark);
    margin: 0;
}

button {
    display: flex;
    align-items: center;
    justify-content: center;
    font: inherit;
    color: inherit;
    background: none;
    border: none;
    padding: 0;
}

a {
    color: inherit;
    text-decoration: none;
}

input {
    flex: 1;
    min-width: 0;
    font: inherit;
    color: inherit;
    background: none;
    border: none;
    outline: none;
    padding: 0;
}

.sprite {
    position: absolute;
    width: 0;
    height: 0;
}

.screen {
    display: flex;
    flex-direction: column;
    height: 100vh;
    overflow: hidden;
}

.icon {
    flex: none;
    width: 16px;
    height: 16px;
}

.icon.tiny {
    width: 8px;
    height: 8px;
}

.icon.tiny-10 {
    width: 10px;
    height: 10px;
}

.icon.tiny-12 {
    width: 12px;
    height: 12px;
}

/* Title bar */
.titlebar {
    display: flex;
    align-items: center;
    height: 23px;
    background-color: var(--accent);
}

.divider {
    width: 3px;
    height: 12px;
    margin: 0 5px 0 6px;
    border: 1px solid #4aa56c;
    border-width: 0 1px;
}

.quick {
    width: 21px;
}

.quick.small {
    width: 16px;
}

.titlebar h1 {
    font-size: 12px;
    font-weight: 400;
    margin: 0;
}

.window-buttons {
    display: flex;
    height: 100%;
    margin-left: auto;
    padding-right: 2px;
}

.window-buttons button {
    width: 46px;
}

/* Ribbon tabs */
.ribbon {
    display: flex;
    height: 23px;
    background-color: #000;
}

.file-tab {
    width: 56px;
    color: #000;
    background-color: var(--accent-light);
}

.tab {
    padding: 0 10px 0 14px;
}

.ribbon-right {
    display: flex;
    align-items: center;
    gap: 8px;
    margin-left: auto;
    padding-right: 3px;
    color: #bbb;
}

.help {
    width: 16px;
    height: 16px;
    border-radius: 50%;
    background-color: #0b6fd0;
    color: #fff;
    font-weight: 700;
}

/* Address bar */
.address-row {
    display: flex;
    align-items: center;
    height: 43px;
    padding-right: 12px;
    padding-bottom: 1px;
}

.nav-buttons {
    display: flex;
    width: 106px;
    padding-left: 4px;
}

.nav {
    width: 30px;
}

.nav.recent {
    width: 16px;
}

.nav.up {
    width: 26px;
}

.address,
.search-box {
    display: flex;
    align-items: center;
    height: 30px;
    border: 1px solid var(--border-color);
}

.address {
    flex: 1;
    padding-left: 2px;
    color: #999;
}

.icon.crumb {
    width: 9px;
    height: 9px;
    margin: 0 7px 0 5px;
}

.crumb-name {
    color: var(--text-color);
    margin-right: auto;
}

.address-btn {
    width: 30px;
    height: 28px;
}

.refresh {
    border-left: 1px solid #141414;
}

.search-box {
    gap: 14px;
    width: 186px;
    margin-left: 12px;
    padding-left: 14px;
    color: #808080;
}

.search-box input::placeholder {
    color: #777;
    opacity: 1;
}

/* Navigation pane */
.main {
    display: flex;
    flex: 1;
    min-height: 0;
}

.sidebar {
    width: 168px;
    padding: 16px 3px 0 1px;
    border-right: 1px solid #2c2c2c;
}

.item {
    display: flex;
    align-items: center;
    gap: 5px;
    height: 22px;
    margin: 1px 0 2px;
    padding-left: 23px;
    white-space: nowrap;
}

.item.child {
    padding-left: 31px;
}

.item.group {
    margin-top: 10px;
}

.item.selected {
    background-color: #333;
}

.pin {
    width: 12px;
    height: 12px;
    margin-left: auto;
    margin-right: 1px;
}

/* Folder view */
.content {
    flex: 1;
    padding: 6px 7px 0 6px;
    background-color: var(--bg-content);
}

.content h2 {
    display: flex;
    align-items: center;
    gap: 4px;
    height: 24px;
    margin: 0;
    font-size: 14px;
    font-weight: 400;
}

.content h2 .icon {
    color: #777;
}

.content h2::after {
    content: "";
    flex: 1;
    height: 1px;
    margin-left: 4px;
    background-color: #2d2d2d;
}

.tiles {
    display: grid;
    grid-template-columns: repeat(auto-fill, 254px);
    row-gap: 8px;
    margin: 7px 0 4px;
    padding-left: 14px;
}

.tile {
    display: flex;
    gap: 4px;
    height: 48px;
}

.tile svg,
.drive svg {
    flex: none;
    width: 48px;
    height: 48px;
}

.tile span {
    padding-top: 6px;
}

.drive {
    display: flex;
    gap: 3px;
    width: 254px;
    margin-top: 6px;
    padding-left: 14px;
}

.drive-info {
    display: flex;
    flex-direction: column;
    flex: 1;
}

.drive-info span {
    padding-left: 1px;
}

.usage {
    height: 13px;
    margin: 1px 0;
    border: 1px solid #bcbcbc;
    background-color: #e6e6e6;
}

.used {
    height: 100%;
    background-color: #da2626;
}

.drive-info .free {
    color: #d5d5d5;
}

/* Status bar */
.status {
    display: flex;
    align-items: center;
    height: 23px;
    padding: 0 7px 0 14px;
    background-color: #333;
    color: #ddd;
}

.caret {
    width: 1px;
    height: 11px;
    margin-left: 8px;
    background-color: #fff;
}

.view-buttons {
    display: flex;
    gap: 6px;
    margin-left: auto;
}

/* Taskbar */
.taskbar {
    display: flex;
    height: 40px;
    background-color: #2f251f;
}

.start {
    width: 48px;
    background-color: #25211f;
}

.task-search {
    display: flex;
    align-items: center;
    gap: 12px;
    width: 344px;
    padding-left: 11px;
    border: 1px solid #5c5c5c;
    background-color: #333;
    font-size: 14px;
}

.task-search input::placeholder {
    color: #cfcfcf;
    opacity: 1;
}

.apps {
    display: flex;
}

.apps button {
    position: relative;
    width: 49px;
    height: 40px;
}

.apps .system {
    width: 48px;
}

.apps .system + button:not(.system) {
    margin-left: 1px;
}

.apps svg {
    width: 24px;
    height: 24px;
}

.apps .active {
    background-color: #574e49;
    border-bottom: 2px solid var(--underline);
    padding-top: 2px;
}

.apps .running::after {
    content: "";
    position: absolute;
    left: 4px;
    right: 5px;
    bottom: 0;
    height: 2px;
    background-color: var(--underline);
}

.adobe {
    font-size: 11px;
    font-weight: 600;
    text-anchor: middle;
}

.line-text {
    font-size: 5px;
    font-weight: 800;
    text-anchor: middle;
    fill: #07b50b;
}

.maya-text {
    font-size: 4px;
    font-weight: 800;
    text-anchor: middle;
    fill: #0c7f82;
}

.tray {
    display: flex;
    margin-left: auto;
    padding-right: 4px;
}

.tray button {
    width: 25px;
}

.tray .lang {
    width: 42px;
}

.tray .clock {
    flex-direction: column;
    width: 61px;
    padding-bottom: 1px;
    line-height: 17px;
}

.tray .notify {
    width: 44px;
    margin-right: 6px;
}

.show-desktop {
    width: 1px;
    background-color: #777;
}
```
